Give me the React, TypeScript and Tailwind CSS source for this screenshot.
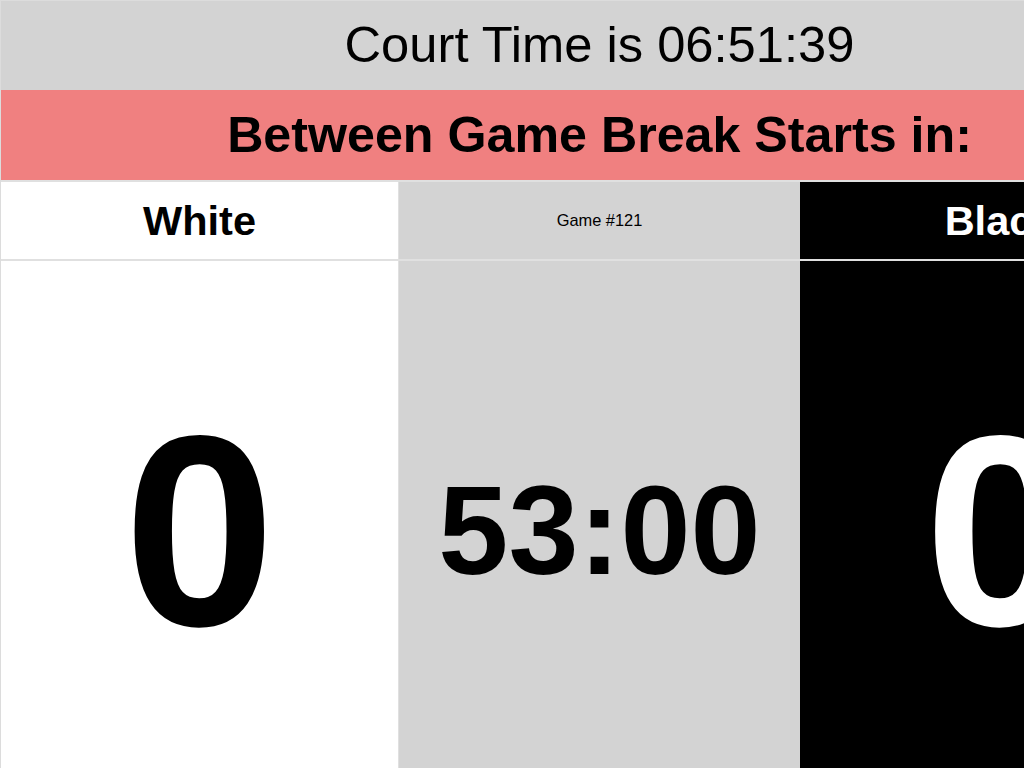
import React from 'react';

interface TeamColumnProps {
    name: string;
    score: number;
    dark?: boolean;
    widthClass: string;
}

const TeamHeader: React.FC<TeamColumnProps> = ({ name, dark, widthClass }) => (
    <div className={`${widthClass} shrink-0 flex items-center justify-center ${dark ? 'bg-black text-white' : 'bg-white text-black'}`}>
        <span className="text-[41.5px] font-bold leading-none">{name}</span>
    </div>
);

const TeamScore: React.FC<TeamColumnProps> = ({ score, dark, widthClass }) => (
    <div className={`${widthClass} shrink-0 flex items-center justify-center ${dark ? 'bg-black text-white' : 'bg-white text-black'}`}>
        <span className="text-[272px] font-bold leading-none">{score}</span>
    </div>
);

export default function App() {
    const courtTime = '06:51:39';
    const gameNumber = 121;
    const timer = '53:00';

    return (
        <div className="w-[1198px] bg-[#e0e0e0] border-t border-l border-[#dcdcdc] font-['Liberation_Sans',Arial,sans-serif] text-black">
            <div className="h-[89px] bg-[#d3d3d3] flex items-center justify-center">
                <h1 className="text-[50.7px] leading-none whitespace-nowrap">Court Time is {courtTime}</h1>
            </div>
            <div className="h-[90px] bg-[#f08080] flex items-center justify-center">
                <h2 className="text-[50.2px] font-bold leading-none whitespace-nowrap">Between Game Break Starts in:</h2>
            </div>
            <div className="mt-[2px] h-[77px] flex">
                <TeamHeader name="White" score={0} widthClass="w-[397px] mr-px" />
                <div className="w-[401px] shrink-0 bg-[#d3d3d3] flex items-center justify-center">
                    <span className="text-[16.4px] leading-none">Game #{gameNumber}</span>
                </div>
                <TeamHeader name="Black" score={0} dark widthClass="w-[400px]" />
            </div>
            <div className="mt-[2px] h-[540px] flex">
                <TeamScore name="White" score={0} widthClass="w-[397px] mr-px" />
                <div className="w-[401px] shrink-0 bg-[#d3d3d3] flex items-center justify-center">
                    <span className="text-[126px] font-bold leading-none">{timer}</span>
                </div>
                <TeamScore name="Black" score={0} dark widthClass="w-[400px]" />
            </div>
        </div>
    );
}
